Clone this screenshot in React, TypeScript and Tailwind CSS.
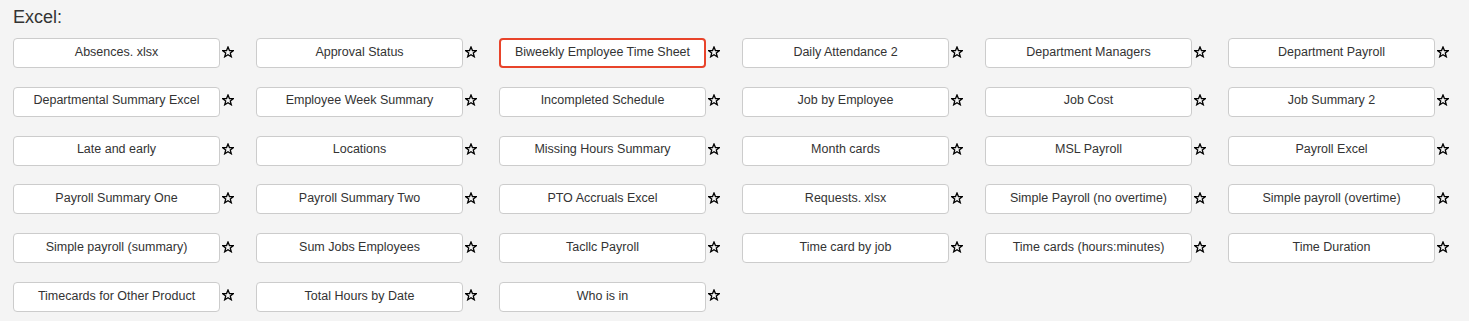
import React from 'react';

const reports: string[] = [
  'Absences. xlsx',
  'Approval Status',
  'Biweekly Employee Time Sheet',
  'Daily Attendance 2',
  'Department Managers',
  'Department Payroll',
  'Departmental Summary Excel',
  'Employee Week Summary',
  'Incompleted Schedule',
  'Job by Employee',
  'Job Cost',
  'Job Summary 2',
  'Late and early',
  'Locations',
  'Missing Hours Summary',
  'Month cards',
  'MSL Payroll',
  'Payroll Excel',
  'Payroll Summary One',
  'Payroll Summary Two',
  'PTO Accruals Excel',
  'Requests. xlsx',
  'Simple Payroll (no overtime)',
  'Simple payroll (overtime)',
  'Simple payroll (summary)',
  'Sum Jobs Employees',
  'Tacllc Payroll',
  'Time card by job',
  'Time cards (hours:minutes)',
  'Time Duration',
  'Timecards for Other Product',
  'Total Hours by Date',
  'Who is in',
];

const StarOutline = () => (
  <svg width="12" height="12" viewBox="0 0 24 24" fill="none" stroke="#000" strokeWidth="2.6" strokeLinejoin="miter">
    <polygon points="12,2 14.9,9.1 22.5,9.3 16.6,14.1 18.6,21.5 12,17.3 5.4,21.5 7.4,14.1 1.5,9.3 9.1,9.1" />
  </svg>
);

export default function App() {
  const selected = 'Biweekly Employee Time Sheet';

  return (
    <div className="min-h-[321px] w-full bg-[#f4f4f4] px-[13px] pt-[4px] font-['Liberation_Sans',Arial,sans-serif] text-[#333]">
      <h3 className="text-[18px] leading-[26px]">Excel:</h3>
      <div className="mt-[8px] grid grid-cols-[repeat(6,243px)] gap-y-[18.8px]">
        {reports.map((name) => (
          <div key={name} className="flex items-center">
            <button
              className={`h-[30px] w-[207px] rounded-[4px] bg-white pb-[2px] text-center text-[12.5px] text-[#333] ${
                name === selected ? 'border-2 border-[#e8432a]' : 'border border-[#ccc]'
              }`}
            >
              {name}
            </button>
            <span className="ml-[2px] mt-[-3px] flex">
              <StarOutline />
            </span>
          </div>
        ))}
      </div>
    </div>
  );
}
